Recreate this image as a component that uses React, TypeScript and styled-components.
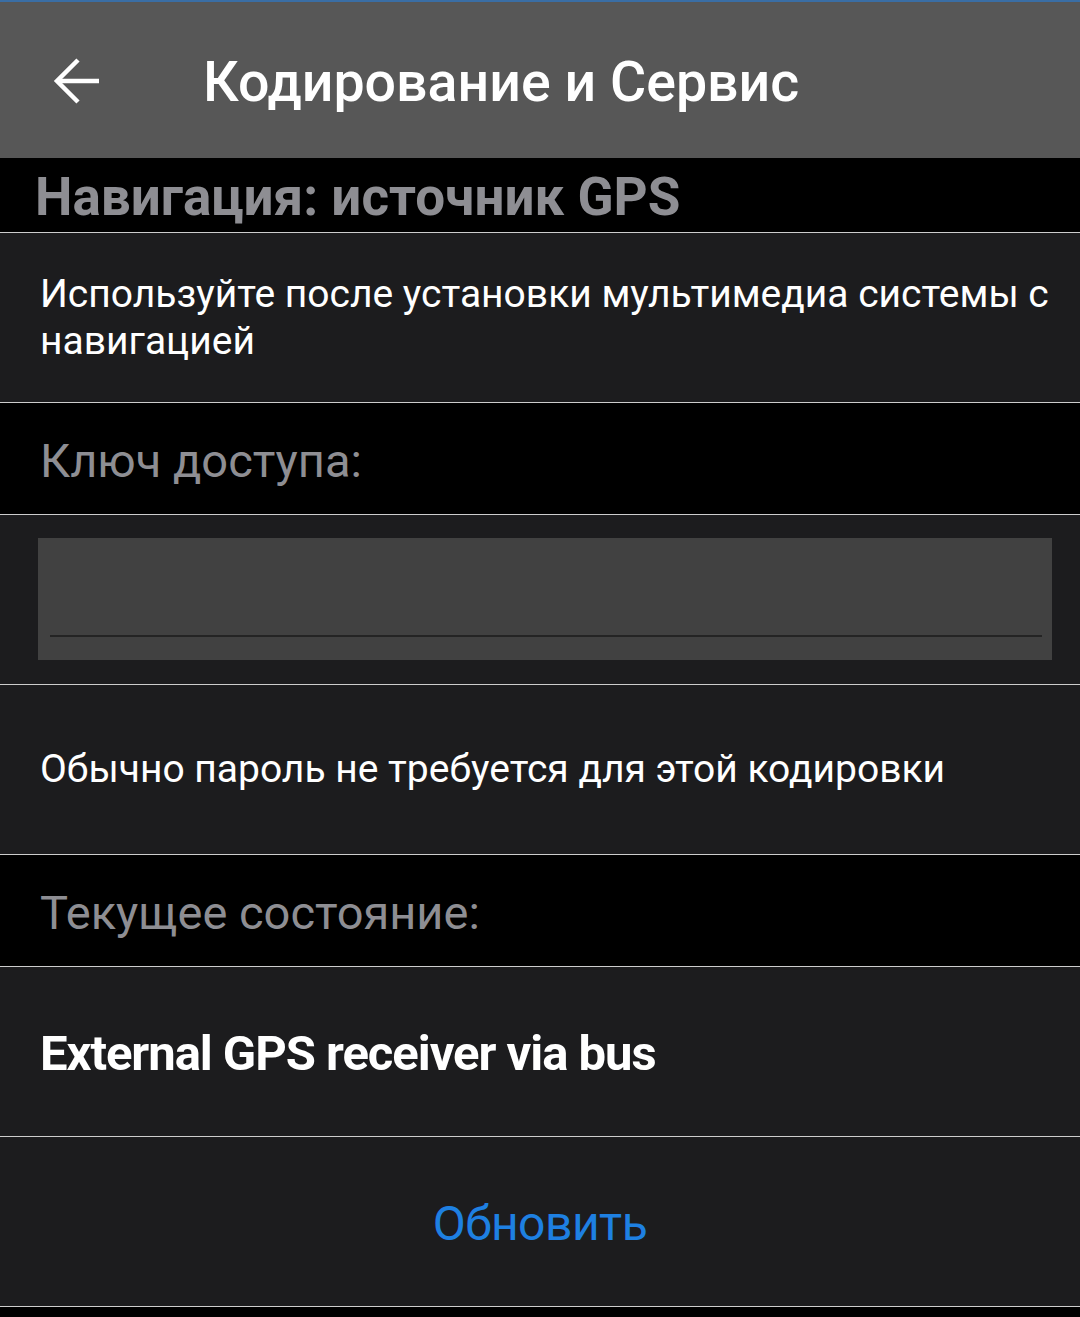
import React from "react";
import styled, { createGlobalStyle } from "styled-components";

const Global = createGlobalStyle`
  html, body { margin: 0; padding: 0; background: #000; }
  body { font-family: Roboto, "Noto Sans", sans-serif; -webkit-font-smoothing: antialiased; }
  * { box-sizing: border-box; }
`;

const Page = styled.div`
  width: 1080px;
  min-height: 1317px;
  background: #000;
  display: flex;
  flex-direction: column;
`;

const AppBar = styled.header`
  height: 158px;
  background: #575757;
  border-top: 2px solid #3a6ea5;
  display: flex;
  align-items: center;
  padding-left: 44px;
`;

const BackButton = styled.button`
  width: 66px;
  height: 66px;
  padding: 0;
  border: 0;
  background: transparent;
  display: flex;
  align-items: center;
  justify-content: center;
  margin-top: 2px;
`;

const Title = styled.h1`
  margin: 6px 0 0 93px;
  color: #fff;
  font-family: Roboto, sans-serif;
  font-weight: 500;
  font-size: 55.5px;
  line-height: 1;
  letter-spacing: 0;
`;

const SectionHeader = styled.div`
  height: 75px;
  background: #000;
  border-bottom: 1px solid #cdcdcd;
  padding: 13px 0 0 35px;
  color: #8e8e93;
  font-weight: 700;
  font-size: 53px;
  line-height: 1;
  white-space: nowrap;
  overflow: hidden;
`;

const Row = styled.div<{ $h?: number; $center?: boolean; $black?: boolean }>`
  height: ${(p) => p.$h ?? 170}px;
  background: ${(p) => (p.$black ? "#000" : "#1c1c1e")};
  border-bottom: 1px solid #cdcdcd;
  display: flex;
  align-items: center;
  justify-content: ${(p) => (p.$center ? "center" : "flex-start")};
  padding: 0 24px 0 40px;
`;

const BodyText = styled.p`
  margin: 0;
  color: #fff;
  font-size: 39px;
  line-height: 47px;
  font-weight: 400;
`;

const Label = styled.span`
  color: #8e8e93;
  font-size: 47px;
  line-height: 1;
  font-weight: 400;
  margin-top: 4px;
`;

const Value = styled.span`
  color: #fff;
  font-size: 49px;
  line-height: 1;
  font-weight: 700;
  letter-spacing: -1.05px;
  margin-top: 4px;
`;

const InputRow = styled.div`
  height: 170px;
  background: #1c1c1e;
  border-bottom: 1px solid #cdcdcd;
  padding: 23px 28px 0 38px;
`;

const InputBox = styled.div`
  height: 122px;
  background: #414141;
  padding: 97px 10px 0 12px;
`;

const Underline = styled.div`
  height: 2px;
  background: #242424;
`;

const LinkButton = styled.button`
  border: 0;
  background: transparent;
  padding: 0;
  color: #1e80e2;
  font-family: Roboto, sans-serif;
  font-size: 48px;
  line-height: 1;
  font-weight: 400;
  letter-spacing: -0.5px;
  margin: 4px 0 0 -16px;
`;

export default function App() {
  return (
    <Page>
      <Global />
      <AppBar>
        <BackButton aria-label="Назад">
          <svg width="66" height="66" viewBox="0 0 66 66" fill="none">
            <path d="M55 33H14" stroke="#fff" strokeWidth="4.5" />
            <path d="M34 12L13 33L34 54" stroke="#fff" strokeWidth="4.5" />
          </svg>
        </BackButton>
        <Title>Кодирование и Сервис</Title>
      </AppBar>
      <SectionHeader>Навигация: источник GPS</SectionHeader>
      <Row>
        <BodyText>Используйте после установки мультимедиа системы с навигацией</BodyText>
      </Row>
      <Row $h={112} $black>
        <Label>Ключ доступа:</Label>
      </Row>
      <InputRow>
        <InputBox>
          <Underline />
        </InputBox>
      </InputRow>
      <Row>
        <BodyText>Обычно пароль не требуется для этой кодировки</BodyText>
      </Row>
      <Row $h={112} $black>
        <Label>Текущее состояние:</Label>
      </Row>
      <Row>
        <Value>External GPS receiver via bus</Value>
      </Row>
      <Row $center>
        <LinkButton>Обновить</LinkButton>
      </Row>
    </Page>
  );
}
